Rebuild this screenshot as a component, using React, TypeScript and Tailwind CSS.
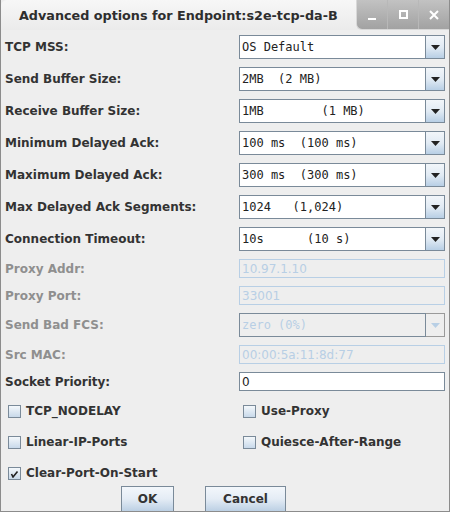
import React from "react";

const sans = "font-['DejaVu_Sans',sans-serif]";
const mono = "font-['DejaVu_Sans_Mono',monospace]";

function Arrow({ disabled }: { disabled?: boolean }) {
  return (
    <svg width="9" height="5" viewBox="0 0 9 5">
      <path d="M0 0H9L4.5 5Z" fill={disabled ? "#b8cfe5" : "#222"} />
    </svg>
  );
}

function Combo({ value, disabled }: { value: string; disabled?: boolean }) {
  return (
    <div className="flex h-[24px] w-[206px]">
      <div
        className={`flex-1 border border-[#7a8a99] px-[2px] flex items-center text-[12px] whitespace-pre ${mono} ${
          disabled ? "bg-[#eeeeee] text-[#b8cfe5]" : "bg-white text-[#222]"
        }`}
      >
        {value}
      </div>
      <div
        className={`w-[19px] flex items-center justify-center border-y border-r ${
          disabled
            ? "border-[#9a9a9a] bg-[#eeeeee]"
            : "border-[#7a8a99] bg-gradient-to-b from-[#f2f6fa] via-[#e2ebf4] to-[#b8cfe5]"
        }`}
      >
        <Arrow disabled={disabled} />
      </div>
    </div>
  );
}

function Field({ value, disabled }: { value: string; disabled?: boolean }) {
  return (
    <div
      className={`h-[19px] w-[206px] border flex items-center px-[2px] text-[12px] ${sans} ${
        disabled
          ? "border-[#b8cfe5] bg-[#eeeeee] text-[#b8cfe5]"
          : "border-[#7a8a99] bg-white text-[#222]"
      }`}
    >
      {value}
    </div>
  );
}

function Row({
  label,
  disabled,
  children,
}: {
  label: string;
  disabled?: boolean;
  children: React.ReactNode;
}) {
  return (
    <div className="flex items-center">
      <div
        className={`w-[234px] text-[12px] font-bold ${sans} ${
          disabled ? "text-[#8f8f8f]" : "text-[#333]"
        }`}
      >
        {label}
      </div>
      {children}
    </div>
  );
}

function Check({ label, checked }: { label: string; checked?: boolean }) {
  return (
    <div className="flex items-center gap-[5px] h-[18px]">
      <div className="w-[13px] h-[13px] border border-[#7a8a99] bg-gradient-to-b from-[#f4f8fb] to-[#c8d9ea] flex items-center justify-center">
        {checked && (
          <svg width="9" height="9" viewBox="0 0 9 9">
            <path d="M1.5 5L3 8L7.5 2.5" stroke="#222" strokeWidth="1.6" fill="none" />
          </svg>
        )}
      </div>
      <span className={`text-[12px] font-bold text-[#333] ${sans}`}>{label}</span>
    </div>
  );
}

function Btn({ label, w }: { label: string; w: string }) {
  return (
    <button
      className={`${w} h-[26px] border border-[#7a8a99] bg-gradient-to-b from-[#f3f7fb] via-[#e4ecf5] to-[#bcd0e4] text-[12px] font-bold text-[#333] ${sans}`}
    >
      {label}
    </button>
  );
}

export default function App() {
  return (
    <div className="w-[450px] h-[512px] bg-[#eeeeee] border-x border-b border-[#8c8c8c] flex flex-col overflow-hidden">
      {/* title bar */}
      <div className="h-[31px] flex bg-gradient-to-b from-[#f7f7f7] to-[#ebebeb] rounded-tl-[6px]">
        <div className="flex-1 flex items-center pl-[18px] pt-[2px]">
          <span className={`text-[12.75px] font-bold text-[#2e2e2e] ${sans}`}>
            Advanced options for Endpoint:s2e-tcp-da-B
          </span>
        </div>
        <div className="w-[93px] h-[30px] flex rounded-bl-[6px] bg-gradient-to-b from-[#c2c2c2] to-[#a2a2a2] border-l border-b border-[#d8d8d8]">
          <div className="w-[31px] flex items-end justify-center pb-[9px] border-r border-[#b8b8b8]">
            <div className="w-[8px] h-[2px] bg-white" />
          </div>
          <div className="w-[31px] flex items-center justify-center border-r border-[#b8b8b8]">
            <div className="w-[9px] h-[9px] border-2 border-white" />
          </div>
          <div className="flex-1 flex items-center justify-center">
            <svg width="10" height="10" viewBox="0 0 10 10">
              <path d="M1 1L9 9M9 1L1 9" stroke="white" strokeWidth="2" />
            </svg>
          </div>
        </div>
      </div>

      {/* form */}
      <div className="flex flex-col gap-[8px] pt-[5px] pl-[4px]">
        <Row label="TCP MSS:">
          <Combo value="OS Default" />
        </Row>
        <Row label="Send Buffer Size:">
          <Combo value="2MB  (2 MB)" />
        </Row>
        <Row label="Receive Buffer Size:">
          <Combo value="1MB        (1 MB)" />
        </Row>
        <Row label="Minimum Delayed Ack:">
          <Combo value="100 ms  (100 ms)" />
        </Row>
        <Row label="Maximum Delayed Ack:">
          <Combo value="300 ms  (300 ms)" />
        </Row>
        <Row label="Max Delayed Ack Segments:">
          <Combo value="1024   (1,024)" />
        </Row>
        <Row label="Connection Timeout:">
          <Combo value="10s      (10 s)" />
        </Row>
        <Row label="Proxy Addr:" disabled>
          <Field value="10.97.1.10" disabled />
        </Row>
        <Row label="Proxy Port:" disabled>
          <Field value="33001" disabled />
        </Row>
        <Row label="Send Bad FCS:" disabled>
          <Combo value="zero (0%)" disabled />
        </Row>
        <Row label="Src MAC:" disabled>
          <Field value="00:00:5a:11:8d:77" disabled />
        </Row>
        <Row label="Socket Priority:">
          <Field value="0" />
        </Row>
      </div>

      <div className="grid grid-cols-[235px_1fr] gap-y-[13px] pl-[7px] pt-[11px]">
        <Check label="TCP_NODELAY" />
        <Check label="Use-Proxy" />
        <Check label="Linear-IP-Ports" />
        <Check label="Quiesce-After-Range" />
        <Check label="Clear-Port-On-Start" checked />
      </div>

      <div className="flex gap-[31px] pt-[4px] pl-[120px]">
        <Btn label="OK" w="w-[53px]" />
        <Btn label="Cancel" w="w-[81px]" />
      </div>
    </div>
  );
}
